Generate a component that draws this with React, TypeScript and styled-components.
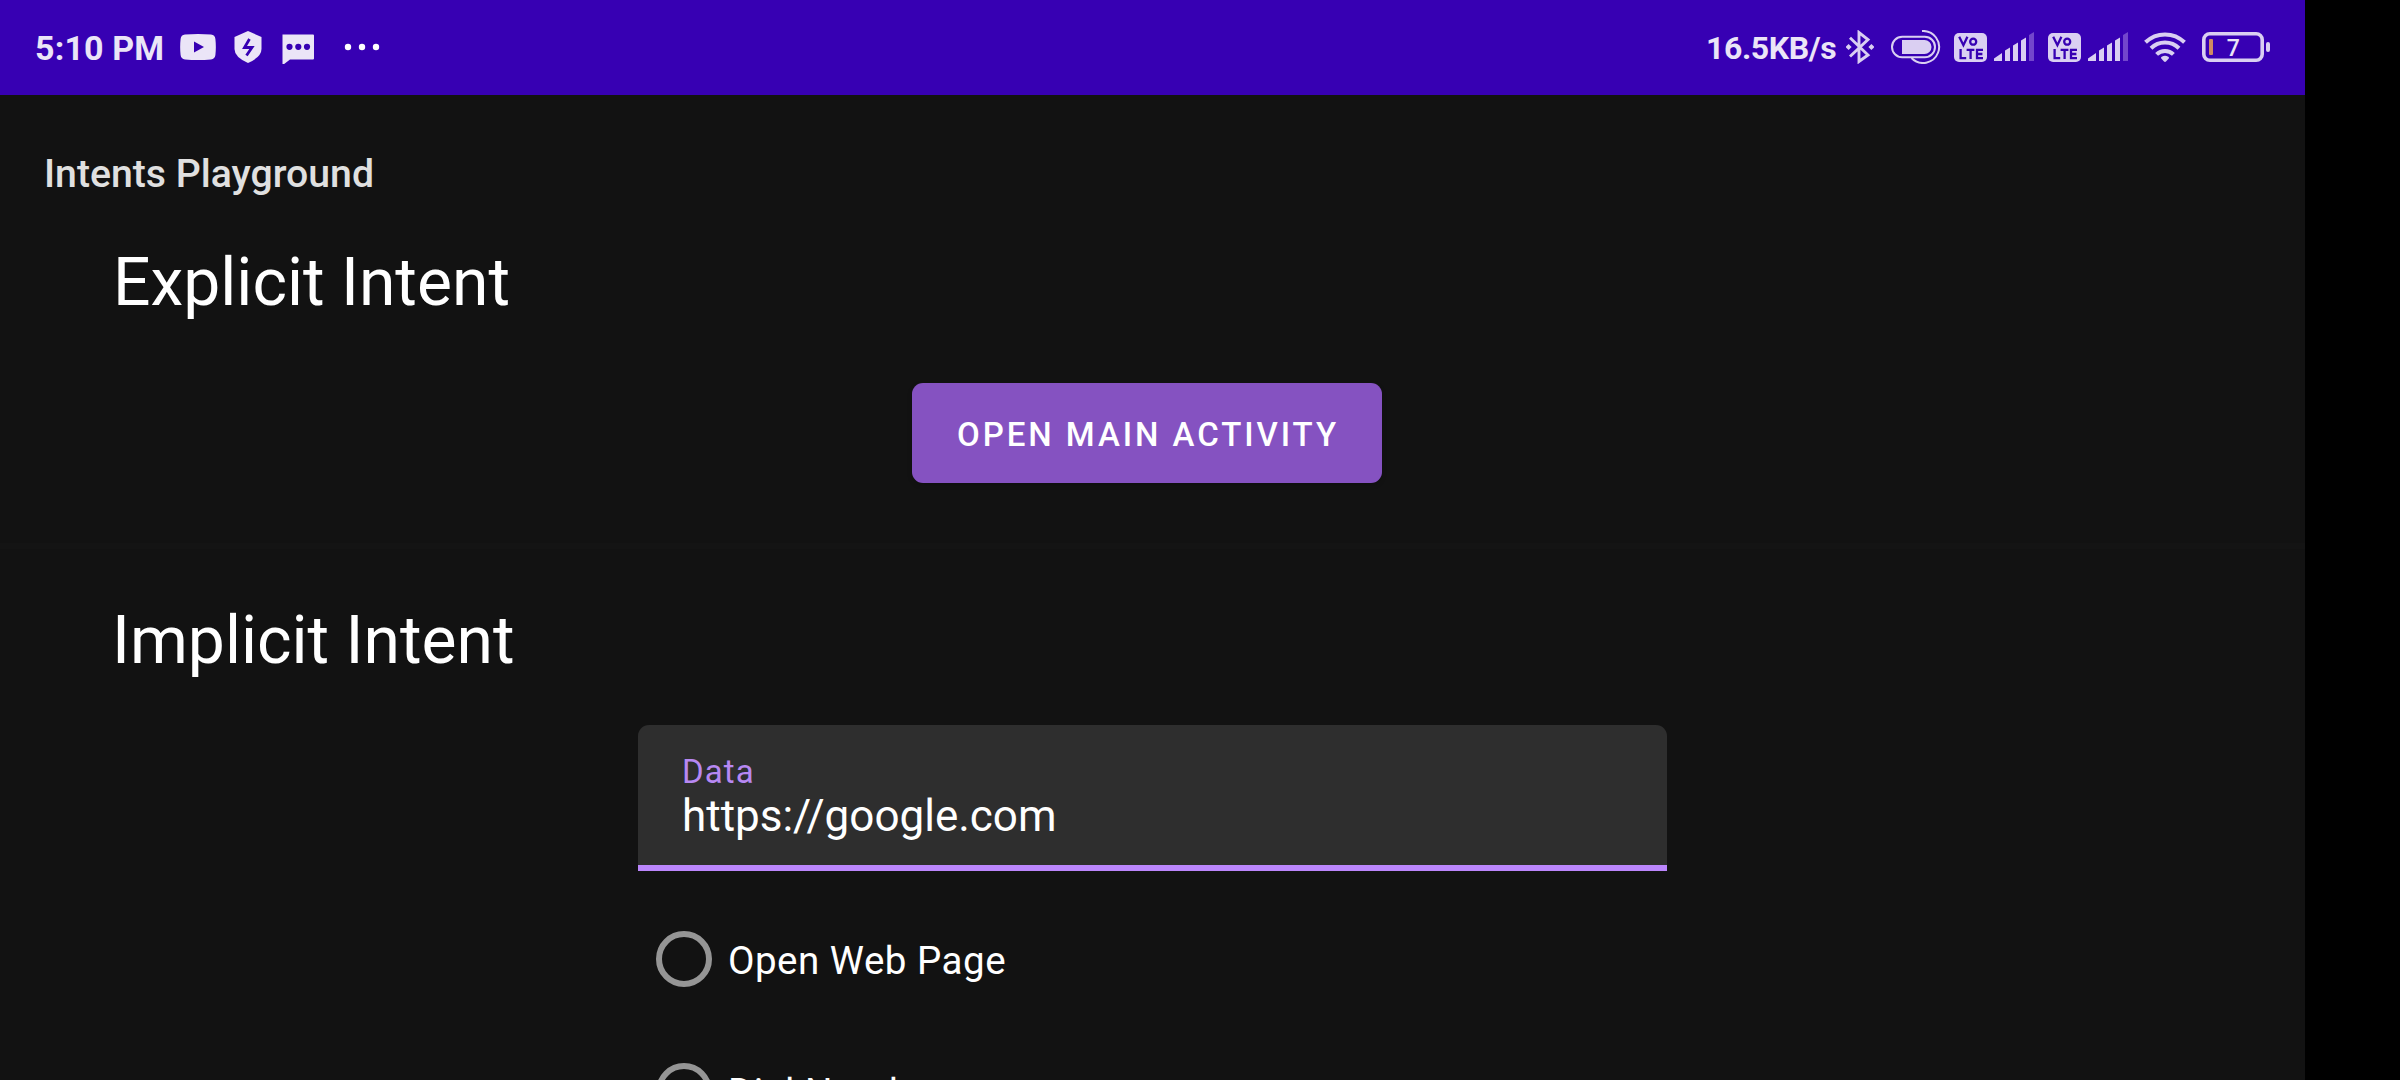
import React from "react";
import styled, { createGlobalStyle } from "styled-components";

const Global = createGlobalStyle`
  * { box-sizing: border-box; }
  body { margin: 0; background: #000; overflow: hidden; }
`;

const Device = styled.div`
  display: flex;
  width: 2400px;
  height: 1080px;
  background: #000;
  overflow: hidden;
  font-family: Roboto, "Noto Sans", sans-serif;
  color: #fff;
  font-kerning: normal;
`;

const Screen = styled.div`
  width: 2305px;
  height: 1080px;
  display: flex;
  flex-direction: column;
  background: #121212;
  overflow: hidden;
`;

const StatusBar = styled.header`
  flex: none;
  display: flex;
  justify-content: space-between;
  height: 95px;
  padding: 0 35px 0 35px;
  background: #3700b3;
`;

const Cluster = styled.div`
  display: flex;
  align-items: center;
  height: 93px;
`;

const StatusText = styled.span<{ $w: number; $size: number; $track?: number }>`
  flex: none;
  width: ${(p) => p.$w}px;
  margin-top: 2px;
  font-size: ${(p) => p.$size}px;
  font-weight: 700;
  line-height: 40px;
  letter-spacing: ${(p) => p.$track ?? 0}px;
  white-space: nowrap;
  color: #ebe5f7;
`;

const Glyph = styled.svg<{ $gap?: number; $drop?: number }>`
  flex: none;
  display: block;
  margin-left: ${(p) => p.$gap ?? 0}px;
  margin-top: ${(p) => p.$drop ?? 0}px;
`;

const AppTitle = styled.h1`
  flex: none;
  margin: 0;
  padding: 57px 44px 0;
  height: 127px;
  font-size: 39.2px;
  font-weight: 500;
  line-height: 44px;
  color: #e0e0e0;
`;

const Section = styled.section<{ $h?: number }>`
  flex: none;
  display: flex;
  flex-direction: column;
  height: ${(p) => (p.$h ? `${p.$h}px` : "auto")};
`;

const Heading = styled.h2<{ $top: number; $left: number }>`
  margin: ${(p) => p.$top}px 0 0 ${(p) => p.$left}px;
  font-size: 66px;
  font-weight: 400;
  line-height: 78px;
`;

const MainButton = styled.button`
  align-self: flex-start;
  width: 470px;
  height: 100px;
  margin: 61px 0 0 912px;
  padding: 3px 0 0 45px;
  border: 0;
  border-radius: 11px;
  background: #8552c1;
  color: #fff;
  font: 500 33px/40px Roboto, sans-serif;
  letter-spacing: 2.95px;
  text-align: left;
  white-space: nowrap;
  box-shadow: 0 2px 5px rgba(0, 0, 0, 0.2);
`;

const Divider = styled.hr`
  flex: none;
  height: 6px;
  margin: 0;
  border: 0;
  background: #141414;
`;

const Field = styled.label`
  display: flex;
  flex-direction: column;
  width: 1029px;
  height: 146px;
  margin: 45px 0 0 638px;
  padding: 27px 44px 0;
  border-radius: 11px 11px 0 0;
  border-bottom: 6px solid #bb86fc;
  background: #2e2e2e;
`;

const FieldLabel = styled.span`
  font-size: 33px;
  line-height: 39px;
  letter-spacing: 1.1px;
  color: #b788f2;
`;

const FieldValue = styled.span`
  font-size: 44px;
  line-height: 50px;
`;

const Options = styled.div`
  display: flex;
  flex-direction: column;
  margin: 22px 0 0 656px;
`;

const Option = styled.div`
  display: flex;
  align-items: center;
  height: 132px;
  font-size: 38.5px;
  line-height: 46px;
  letter-spacing: 0.5px;
`;

const OptionText = styled.span`
  margin-left: 16px;
  padding-top: 3px;
`;

const Radio = styled.span`
  width: 56px;
  height: 56px;
  border: 6px solid #959595;
  border-radius: 50%;
`;

const LIT = "#dacff2";

const Volte = ({ gap }: { gap: number }) => (
  <Glyph $gap={gap} $drop={2} width="33" height="29" viewBox="0 0 33 29">
    <rect width="33" height="29" rx="5" fill={LIT} />
    <g fill="none" stroke="#3700b3" strokeWidth="2.3">
      <path d="M5.2 3.8 9.4 12.2 13.4 3.8" />
      <circle cx="19.2" cy="8.7" r="3" />
      <path d="M6.6 16v9.2h5.6M12.6 16.8h7.8M16.6 16.8v9.2M29 16.8h-6v8.4h6M23 21h5.4" />
    </g>
  </Glyph>
);

const Signal = ({ gap }: { gap: number }) => (
  <Glyph $gap={gap} width="40" height="29" viewBox="0 0 40 29">
    <path
      fill={LIT}
      d="M0 29v-2.5L8 21v8zM11 29V18.5l5-3V29zM19 29V13.500l5-3V29zM27 29V8.500l5-3V29z"
    />
    <path fill="#7346cc" d="M35 29V3l5-3v29z" />
  </Glyph>
);

const App = () => (
  <Device>
    <Global />
    <Screen>
      <StatusBar>
        <Cluster>
          <StatusText $w={145} $size={34} $track={0.15}>5:10 PM</StatusText>
          <Glyph width="36" height="26" viewBox="0 0 36 26">
            <path
              fill="#ebe5f7"
              d="M5 .6Q18-.6 31 .6q4 .4 4.400 4.400.9 8 0 16-.4 4-4.400 4.400-13 1.200-26 0-4-.4-4.400-4.400-.9-8 0-16Q1 1 5 .6z"
            />
            <path fill="#3700b3" d="m14 7.500 10 5.500-10 5.500z" />
          </Glyph>
          <Glyph $gap={18} width="28" height="32" viewBox="0 0 28 32">
            <path fill="#ebe5f7" d="M14 0 27.500 6v12q0 8-13.500 14Q.5 26 .5 18V6z" />
            <path fill="none" stroke="#3700b3" strokeWidth="2.800" d="m15.500 8-5 8.500h7.500l-5.500 8" />
          </Glyph>
          <Glyph $gap={19} $drop={2} width="34" height="32" viewBox="0 0 34 32">
            <path fill="#ebe5f7" d="M1.500 2.500H32q1 0 1 1v23q0 1-1 1H9l-6.500 5q-1 .4-1-.6V3.500q0-1 0-1z" />
            <g fill="#3700b3">
              <circle cx="8.500" cy="14.800" r="3.100" />
              <circle cx="17.300" cy="14.800" r="3.100" />
              <circle cx="26" cy="14.800" r="3.100" />
            </g>
          </Glyph>
          <Glyph $gap={29} width="36" height="8" viewBox="0 0 36 8">
            <g fill="#fff">
              <circle cx="4" cy="4" r="3.200" />
              <circle cx="18" cy="4" r="3.200" />
              <circle cx="32" cy="4" r="3.200" />
            </g>
          </Glyph>
        </Cluster>
        <Cluster>
          <StatusText $w={140} $size={32} $track={-0.4}>16.5KB/s</StatusText>
          <Glyph width="28" height="34" viewBox="0 0 28 34">
            <path
              fill="none"
              stroke={LIT}
              strokeWidth="2.900"
              d="M4 7.800 22 25 13 31.500V2.500l9 7L4 26.500"
            />
            <path fill={LIT} d="m2.600 14 3 3-3 3-3-3zM25.400 14l3 3-3 3-3-3z" />
          </Glyph>
          <Glyph $gap={17} width="50" height="34" viewBox="0 0 50 34">
            <rect x="1" y="6.800" width="43" height="20.400" rx="10.200" fill="none" stroke={LIT} strokeWidth="2" />
            <path fill={LIT} d="M11 10h22.500a7 7 0 0 1 0 14H11z" />
            <path fill="none" stroke={LIT} strokeWidth="2" d="M31 1a16 16 0 1 1-10.500 27" />
          </Glyph>
          <Volte gap={13} />
          <Signal gap={7} />
          <Volte gap={14} />
          <Signal gap={7} />
          <Glyph $gap={16} width="42" height="30" viewBox="0 0 42 30">
            <g fill="none" stroke={LIT} strokeWidth="4">
              <path d="M1.500 10.300a28 28 0 0 1 39 0" />
              <path d="M7 16.300a20 20 0 0 1 28 0" />
              <path d="M12.600 22.400a11.800 11.800 0 0 1 16.800 0" />
            </g>
            <path fill={LIT} d="M22 29.600q-1 .8-2 0l-2.700-3.100q-.7-1 .4-1.700 3.300-1.900 6.600 0 1.100.7.4 1.700z" />
          </Glyph>
          <Glyph $gap={16} width="68" height="30" viewBox="0 0 68 30">
            <rect x="1.800" y="1.800" width="58.400" height="26.400" rx="6" fill="none" stroke={LIT} strokeWidth="3.600" />
            <rect x="7" y="7" width="4" height="16" rx="1" fill="#d08a62" />
            <rect x="64" y="10" width="4" height="10" rx="2" fill={LIT} />
            <text x="31.300" y="23.700" textAnchor="middle" fontFamily="Roboto" fontWeight="500" fontSize="23" fill="#ebe5f7">7</text>
          </Glyph>
        </Cluster>
      </StatusBar>
      <AppTitle>Intents Playground</AppTitle>
      <Section $h={321}>
        <Heading $top={22} $left={113}>Explicit Intent</Heading>
        <MainButton>OPEN MAIN ACTIVITY</MainButton>
      </Section>
      <Divider />
      <Section>
        <Heading $top={53} $left={112}>Implicit Intent</Heading>
        <Field>
          <FieldLabel>Data</FieldLabel>
          <FieldValue>https://google.com</FieldValue>
        </Field>
        <Options>
          <Option><Radio /><OptionText>Open Web Page</OptionText></Option>
          <Option><Radio /><OptionText>Dial Number</OptionText></Option>
        </Options>
      </Section>
    </Screen>
  </Device>
);

export default App;
